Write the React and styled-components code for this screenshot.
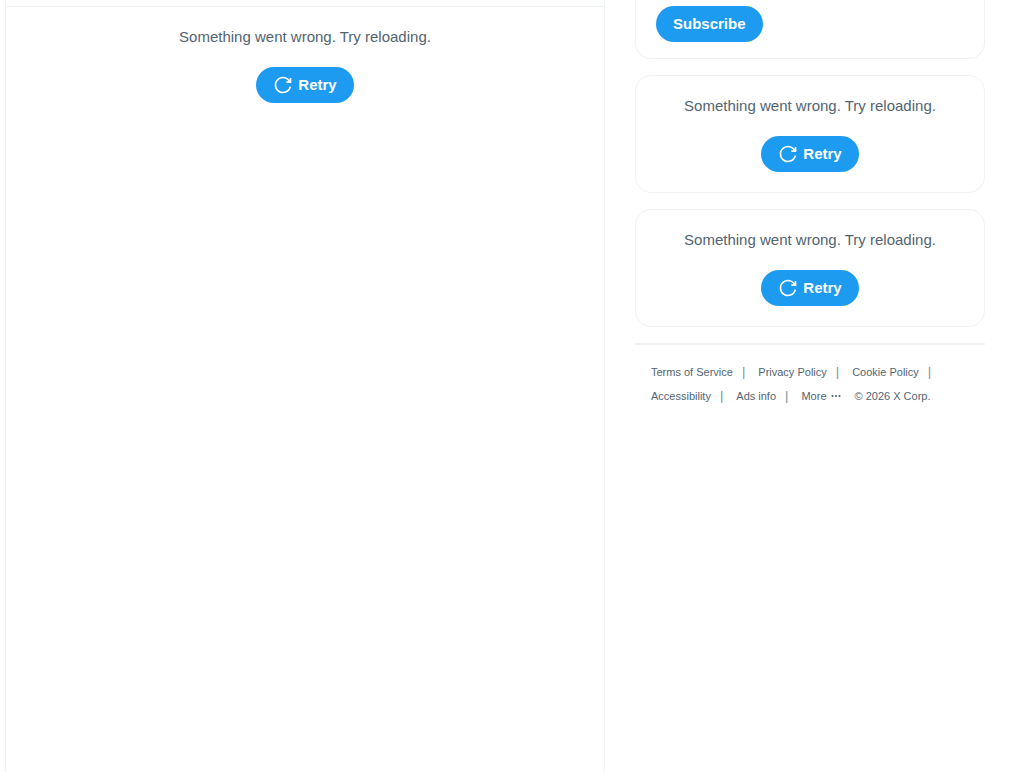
import React from 'react';
import styled, { createGlobalStyle } from 'styled-components';

const colors = {
  accent: '#1d9bf0',
  border: '#eff3f4',
  text: '#536471',
  separator: '#7b8f9e',
};

const GlobalStyle = createGlobalStyle`
  * {
    box-sizing: border-box;
  }

  body {
    margin: 0;
    background: #fff;
    color: ${colors.text};
    font-family: "Liberation Sans", Arial, sans-serif;
    font-size: 15px;
    line-height: 20px;
  }
`;

const StyledPage = styled('div')`
  display: flex;
  gap: 30px;
  min-height: 100vh;
  padding: 0 27px 0 5px;
`;

const StyledMain = styled('main')`
  flex: 1;
  min-width: 0;
  border: solid ${colors.border};
  border-width: 0 1px;
`;

const StyledTabBar = styled('div')`
  height: 7px;
  border-bottom: 1px solid ${colors.border};
`;

const StyledSidebar = styled('aside')`
  display: flex;
  flex: 0 0 350px;
  flex-direction: column;
  gap: 16px;
`;

const StyledSubscribeCard = styled('section')`
  padding: 6px 20px 16px;
  border: solid ${colors.border};
  border-width: 0 1px 1px;
  border-radius: 0 0 16px 16px;
`;

const StyledCard = styled('section')`
  border: 1px solid ${colors.border};
  border-radius: 16px;
`;

const StyledError = styled('div')`
  display: flex;
  flex-direction: column;
  align-items: center;
  gap: 20px;
  padding: 20px;
`;

const StyledMessage = styled('p')`
  margin: 0;
  text-align: center;
`;

const StyledButton = styled('button')`
  display: inline-flex;
  align-items: center;
  justify-content: center;
  gap: 5px;
  min-width: 98px;
  height: 36px;
  padding: 0 17px;
  border: 0;
  border-radius: 18px;
  background: ${colors.accent};
  color: #fff;
  font: inherit;
  font-weight: 700;
  cursor: pointer;
`;

const StyledFooter = styled('nav')`
  display: flex;
  flex-wrap: wrap;
  column-gap: 13px;
  padding: 15px 16px;
  border-top: 2px solid ${colors.border};
  font-size: 11px;
  line-height: 24px;
`;

const StyledFooterItem = styled('span')`
  display: flex;
  gap: 9px;
`;

const StyledLink = styled('a')`
  color: inherit;
  text-decoration: none;

  &:hover {
    text-decoration: underline;
  }
`;

const StyledSeparator = styled('span')`
  color: ${colors.separator};
  font-size: 13px;
`;

const StyledMoreButton = styled('button')`
  display: flex;
  align-items: center;
  gap: 3px;
  padding: 0;
  border: 0;
  background: none;
  color: inherit;
  font: inherit;
  cursor: pointer;
`;

const RetryIcon = () => (
  <svg width="20" height="20" viewBox="0 0 24 24" fill="currentColor" aria-hidden="true">
    <path d="M12 4c-4.418 0-8 3.58-8 8s3.582 8 8 8c3.806 0 6.993-2.66 7.802-6.22l1.95.44C20.742 18.67 16.76 22 12 22 6.477 22 2 17.52 2 12S6.477 2 12 2c3.272 0 6.176 1.57 8 4V3.5h2v6h-6v-2h2.616C17.175 5.39 14.749 4 12 4z" />
  </svg>
);

const MoreIcon = () => (
  <svg width="12" height="12" viewBox="0 0 24 24" fill="currentColor" aria-hidden="true">
    <path d="M3 12c0-1.1.9-2 2-2s2 .9 2 2-.9 2-2 2-2-.9-2-2zm9 2c1.1 0 2-.9 2-2s-.9-2-2-2-2 .9-2 2 .9 2 2 2zm7 0c1.1 0 2-.9 2-2s-.9-2-2-2-2 .9-2 2 .9 2 2 2z" />
  </svg>
);

const LoadError = () => (
  <StyledError>
    <StyledMessage>Something went wrong. Try reloading.</StyledMessage>
    <StyledButton type="button">
      <RetryIcon />
      Retry
    </StyledButton>
  </StyledError>
);

const footerLinks = [
  'Terms of Service',
  'Privacy Policy',
  'Cookie Policy',
  'Accessibility',
  'Ads info',
];

const App = () => (
  <>
    <GlobalStyle />
    <StyledPage>
      <StyledMain>
        <StyledTabBar />
        <LoadError />
      </StyledMain>

      <StyledSidebar>
        <StyledSubscribeCard>
          <StyledButton type="button">Subscribe</StyledButton>
        </StyledSubscribeCard>
        <StyledCard>
          <LoadError />
        </StyledCard>
        <StyledCard>
          <LoadError />
        </StyledCard>

        <StyledFooter>
          {footerLinks.map(label => (
            <StyledFooterItem key={label}>
              <StyledLink href="#">{label}</StyledLink>
              <StyledSeparator aria-hidden="true">|</StyledSeparator>
            </StyledFooterItem>
          ))}
          <StyledMoreButton type="button">
            More
            <MoreIcon />
          </StyledMoreButton>
          <span>© 2026 X Corp.</span>
        </StyledFooter>
      </StyledSidebar>
    </StyledPage>
  </>
);

export default App;
